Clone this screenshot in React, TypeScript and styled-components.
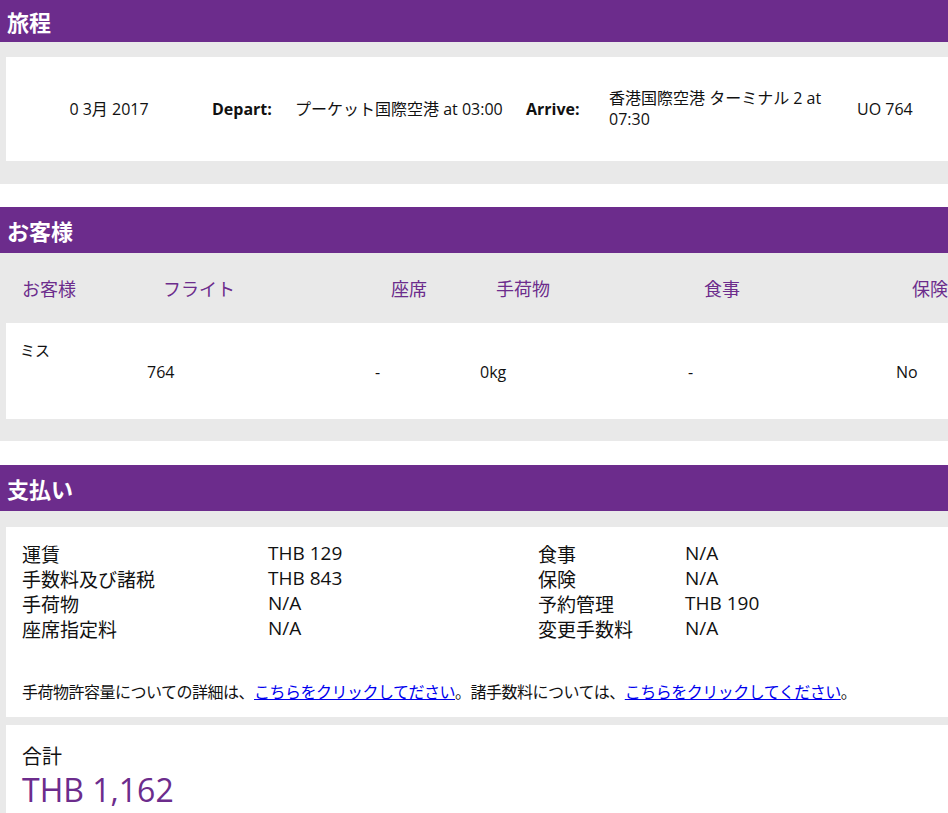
import React from "react";
import styled, { createGlobalStyle } from "styled-components";

const G = createGlobalStyle`
  body { margin: 0; font-family: "Open Sans", "Noto Sans CJK JP", sans-serif; color: #111; background: #fff; }
`;
const P = "#6c2c8c";
const Bar = styled.div`
  background: ${P}; color: #fff; height: 46px; display: flex; align-items: center;
  padding-left: 7px; font-size: 22px; font-weight: bold; font-family: "Noto Sans CJK JP", sans-serif;
`;
const FirstBar = styled(Bar)` height: 42px; `;
const Grey = styled.div<{ $pb?: number }>`
  background: #e9e9e9; padding: 15px 0 ${p => p.$pb ?? 23}px 6px; margin-bottom: 23px;
`;
const Card = styled.div`
  background: #fff; display: grid; align-items: center;
  grid-template-columns: 206px 83px 231px 83px 248px auto;
  height: 104px; font-size: 16px; line-height: 21px; font-family: "Noto Sans CJK JP", sans-serif;
`;
const Cell = styled.div<{ $b?: boolean; $c?: boolean }>`
  font-weight: ${p => (p.$b ? "bold" : "normal")};
  text-align: ${p => (p.$c ? "center" : "left")};
  font-family: "Open Sans", "Noto Sans CJK JP", sans-serif;
`;
const PGrey = styled.div`
  background: #e9e9e9; padding: 0 0 22px 6px; margin-bottom: 24px;
`;
const cols = "141px 228px 105px 208px 208px auto";
const HeadRow = styled.div`
  display: grid; grid-template-columns: ${cols}; height: 70px; align-items: center;
  padding-left: 16px; color: ${P}; font-size: 18px; font-family: "Noto Sans CJK JP", sans-serif;
`;
const PCard = styled.div`
  background: #fff; height: 96px; padding: 16px 0 0 14px; box-sizing: border-box;
  font-size: 16px; font-family: "Open Sans", "Noto Sans CJK JP", sans-serif;
`;
const Mr = styled.div` font-size: 15px; height: 22px; `;
const PRow = styled.div`
  display: grid; grid-template-columns: 127px 228px 105px 208px 208px auto;
`;
const Pay = styled.div`
  background: #e9e9e9; padding: 16px 0 0 6px;
`;
const PayCard = styled.div`
  background: #fff; padding: 14px 0 14px 16px; margin-bottom: 8px;
`;
const PayGrid = styled.div`
  display: grid; grid-template-columns: 246px 270px 147px auto; font-size: 19px; line-height: 25px;
  font-family: "Noto Sans CJK JP", sans-serif;
  & > :nth-child(even) { font-family: "Open Sans", "Noto Sans CJK JP", sans-serif; }
`;
const Note = styled.div`
  margin-top: 38px; font-size: 16px; font-family: "Noto Sans CJK JP", sans-serif; letter-spacing: -0.5px;
  a { color: #00e; }
`;
const Total = styled.div`
  background: #fff; padding: 16px 16px 8px; font-family: "Noto Sans CJK JP", sans-serif;
`;
const TLabel = styled.div` font-size: 20px; line-height: 30px; `;
const TAmt = styled.div` font-size: 32px; color: ${P}; font-family: "Open Sans", sans-serif; line-height: 38px; `;

export default function App() {
  const pay = [["運賃", "THB 129", "食事", "N/A"], ["手数料及び諸税", "THB 843", "保険", "N/A"], ["手荷物", "N/A", "予約管理", "THB 190"], ["座席指定料", "N/A", "変更手数料", "N/A"]];
  return (
    <>
      <G />
      <FirstBar>旅程</FirstBar>
      <Grey>
        <Card>
          <Cell $c>0 3月 2017</Cell>
          <Cell $b>Depart:</Cell>
          <Cell>プーケット国際空港 at 03:00</Cell>
          <Cell $b>Arrive:</Cell>
          <Cell>香港国際空港 ターミナル 2 at 07:30</Cell>
          <Cell>UO 764</Cell>
        </Card>
      </Grey>
      <Bar>お客様</Bar>
      <PGrey>
        <HeadRow>
          <div>お客様</div><div>フライト</div><div>座席</div><div>手荷物</div><div>食事</div><div>保険</div>
        </HeadRow>
        <PCard>
          <Mr>ミス</Mr>
          <PRow>
            <div></div><div>764</div><div>-</div><div>0kg</div><div>-</div><div>No</div>
          </PRow>
        </PCard>
      </PGrey>
      <Bar>支払い</Bar>
      <Pay>
        <PayCard>
          <PayGrid>{pay.flat().map((t, i) => <div key={i}>{t}</div>)}</PayGrid>
          <Note>
            手荷物許容量についての詳細は、<a href="#">こちらをクリックしてださい</a>。諸手数料については、<a href="#">こちらをクリックしてください</a>。
          </Note>
        </PayCard>
        <Total>
          <TLabel>合計</TLabel>
          <TAmt>THB 1,162</TAmt>
        </Total>
      </Pay>
    </>
  );
}
